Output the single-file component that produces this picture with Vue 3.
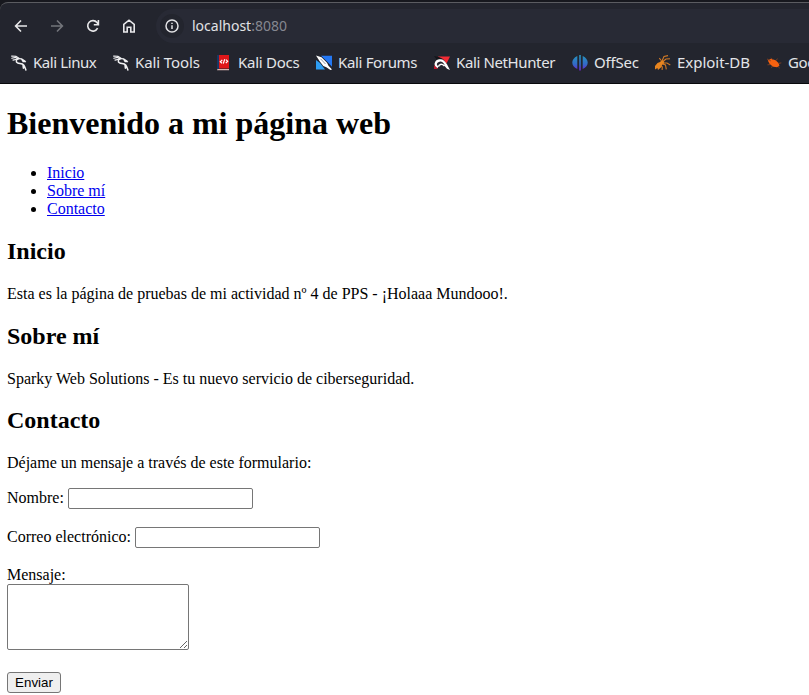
<script setup>
const bookmarks = [
  { label: 'Kali Linux', icon: 'dragon', width: 102, spacing: -0.42 },
  { label: 'Kali Tools', icon: 'dragon', width: 103, spacing: -0.1 },
  { label: 'Kali Docs', icon: 'docs', width: 100, spacing: -0.27 },
  { label: 'Kali Forums', icon: 'forums', width: 118, spacing: -0.34 },
  { label: 'Kali NetHunter', icon: 'hunter', width: 138, spacing: -0.38 },
  { label: 'OffSec', icon: 'offsec', width: 83, spacing: -0.2 },
  { label: 'Exploit-DB', icon: 'exploit', width: 111, spacing: -0.03 },
  { label: 'Google Hacking DB', icon: 'bug', width: 160, spacing: -0.35 }
]
const links = [
  { label: 'Inicio', id: 'inicio' },
  { label: 'Sobre mí', id: 'sobre-mi' },
  { label: 'Contacto', id: 'contacto' }
]
</script>

<template>
  <div class="window">
    <header class="chrome">
      <div class="panel">
        <div class="toolbar">
          <div class="tools">
            <svg class="tool" viewBox="0 0 16 16"><path d="M14 8H3M8 2.500 2.600 8 8 13.500" /></svg>
            <svg class="tool dim" viewBox="0 0 16 16"><path d="M2 8h11M8 2.500 13.400 8 8 13.500" /></svg>
            <svg class="tool" viewBox="0 0 16 16"><path d="M12.600 10.200A5.200 5.200 0 1 1 12 4.600l1.200 1.700M13.400 2v4.800H8.800" /></svg>
            <svg class="tool" viewBox="0 0 16 16"><path d="M2.800 14V6.300L8 2.200l5.200 4.100V14h-3.400V9.200H6.200V14Z" /></svg>
          </div>
          <div class="address">
            <span class="info">
              <svg viewBox="0 0 16 16"><circle cx="8" cy="8" r="6" /><path d="M8 7.300v3.800M8 4.700v1.400" /></svg>
            </span>
            <span class="url">localhost<span class="port">:8080</span></span>
          </div>
        </div>
        <nav class="bookmarks">
          <div v-for="b in bookmarks" :key="b.label" class="bookmark" :style="{ width: b.width + 'px', letterSpacing: b.spacing + 'px' }">
            <svg v-if="b.icon === 'dragon'" viewBox="0 0 16 16" fill="none" stroke="#f1f1f3" stroke-linecap="round">
              <path d="M.6 1.100 5 1.200 8 3.200M.8 3.300 4.400 2.400 7 4.300M2 5.100l3.800-.9" stroke-width="1.100" />
              <path d="M7 3.700c-2 .7-2.300 3.300-.5 4.200C8.200 9 11 8 12.700 10c1.100 1.400 1.500 3 2.200 5M12 10l.4 3.200" stroke-width="1.500" />
              <path d="m7.500 3.600 3.100.2 3.300 2.300M10.500 4l1.600 2.500 2.400.1" stroke-width="1.300" />
            </svg>
            <svg v-else-if="b.icon === 'docs'" viewBox="0 0 16 16">
              <path fill="#173765" d="M1 0h2v14H1z" /><path fill="#df1719" d="M3 0h10v13.500H3z" /><path fill="#d9b5af" d="M1.500 14H13v1.300H1z" />
              <path d="m6.300 4.800-2 2 1.700 1.500M9.900 4.600l1.800 1.600-1.900 2M8.700 4.300 7.300 8.600" fill="none" stroke="#fff" stroke-width="1.200" />
            </svg>
            <svg v-else-if="b.icon === 'forums'" viewBox="0 0 16 16">
              <path fill="#2d9df2" d="M0 5l4 3 5 6.500H0z" /><path fill="#2478f4" d="M5 .8h11v11L11.500 7z" />
              <path fill="#fff" d="M0 .5 5.500 2.200 11 7.700l1.500 3L16 14.500l-1.500.500-4.200-2.700-3-1.300L3.500 6z" />
              <path d="M4.500 3.800 9.500 9" fill="none" stroke="#6f7785" stroke-width=".8" />
            </svg>
            <svg v-else-if="b.icon === 'hunter'" viewBox="0 0 16 16">
              <path fill="#f32b34" d="M4 1.500h12l-3.500 7L9.500 4.500 5 3z" /><path fill="#c4192d" d="m0 10 4 4H0z" /><path fill="#14151a" d="m0 1 5 1 4 2-6 1z" />
              <path d="M4 12.300C.2 10.200 1.500 6.300 5.300 5.500 9 4.700 10.700 7.400 12.300 10.500" fill="none" stroke="#fff" stroke-width="2.300" />
              <path d="M4.500 11.600C5 9.200 7.500 8.300 10.500 11" fill="none" stroke="#fff" stroke-width="1.500" />
              <path fill="#fff" d="m9.500 9.800 3.500 4L16 15l-2.800-5.300z" />
            </svg>
            <svg v-else-if="b.icon === 'offsec'" viewBox="0 0 16 16">
              <defs><linearGradient id="offsec" x2="0" y2="1"><stop stop-color="#2596bd" /><stop offset=".6" stop-color="#336ac7" /><stop offset="1" stop-color="#7020ce" /></linearGradient></defs>
              <path fill="url(#offsec)" d="M5.300.9v13.200C-1.400 11-1.400 4 5.300.9ZM7.200 0h1.600v15.500H7.200zM10.700.9v13.200c6.700-3.100 6.700-10.100 0-13.200Z" />
            </svg>
            <svg v-else-if="b.icon === 'exploit'" viewBox="0 0 16 16">
              <path fill="#e8851f" d="m0 11 2.500-3L5 7l2-2 2 1 .2 2.500-2 1.200-.7 2.300L3 15l-.6-2L0 14.500z" />
              <path d="M7 6 9 1.500 13 .6M8 6.500 11 4l4-.2M8 8h4l3.300 2M7.500 9l3 1 .8 4.300M6.200 5.500 4.300 3.200M5.500 10l1.800 2-.2 3" fill="none" stroke="#d37a25" stroke-width="1.100" />
            </svg>
            <svg v-else viewBox="0 0 16 16">
              <path fill="#f66210" d="m1.800 5.600 3-1.800 4.800 1.500 3.200 2.900.6 2.600-2.300 1.500-3.700-.5-3.600-2.500z" />
              <path d="M1 4 5 6M7 5 5 2.800M10 5.600l1.500-2M12 8.500l3.300-.6M5 9.500l-3.500.3M7 11.300l-2 1.200M12 11.500l1.600 1.500" fill="none" stroke="#92451f" stroke-width=".8" />
            </svg>
            <span class="name">{{ b.label }}</span>
          </div>
        </nav>
      </div>
    </header>
    <main class="page">
      <h1>Bienvenido a mi página web</h1>
      <ul><li v-for="l in links" :key="l.id"><a :href="'#' + l.id">{{ l.label }}</a></li></ul>
      <section id="inicio">
        <h2>Inicio</h2>
        <p>Esta es la página de pruebas de mi actividad nº 4 de PPS - ¡Holaaa Mundooo!.</p>
      </section>
      <section id="sobre-mi">
        <h2>Sobre mí</h2>
        <p>Sparky Web Solutions - Es tu nuevo servicio de ciberseguridad.</p>
      </section>
      <section id="contacto">
        <h2>Contacto</h2>
        <p>Déjame un mensaje a través de este formulario:</p>
        <form @submit.prevent>
          <label for="nombre">Nombre:</label>&#32;<input id="nombre" type="text"><br><br>
          <label for="correo">Correo electrónico:</label>&#32;<input id="correo" type="email"><br><br>
          <label for="mensaje">Mensaje:</label><br>
          <textarea id="mensaje" rows="4"></textarea><br><br>
          <button type="submit">Enviar</button>
        </form>
      </section>
    </main>
  </div>
</template>

<style>
body { margin: 0; background: #fff; overflow: hidden; }
</style>
<style scoped>
.window { height: 695px; overflow: hidden; background: #fff; }
.chrome { height: 84px; box-sizing: border-box; padding-top: 2px; background: #17181e; border-bottom: 1px solid #08090c; overflow: hidden; font-family: "Noto Sans", sans-serif; }
.panel { height: 81px; box-sizing: border-box; background: #23252e; border-top: 1px solid #5b5c61; border-top-left-radius: 8px; }
.toolbar { display: flex; height: 46px; padding-top: 6px; box-sizing: border-box; }
.tools { display: flex; gap: 20px; width: 156px; box-sizing: border-box; padding: 9px 0 0 13px; }
.tool { width: 16px; height: 16px; flex: none; fill: none; stroke: #e8e8ea; stroke-width: 1.6; }
.dim { stroke: #73757b; }
.address { flex: 1; display: flex; align-items: center; height: 34px; background: #282a35; border-radius: 17px 0 0 17px; }
.info { display: flex; align-items: center; justify-content: center; width: 24px; height: 24px; margin-left: 4px; border-radius: 50%; background: #23252e; }
.info svg { width: 16px; height: 16px; fill: none; stroke: #e3e3e6; stroke-width: 1.5; }
.url { margin-left: 8px; font-size: 14px; line-height: 20px; color: #e1e2e6; }
.port { color: #858790; }
.bookmarks { display: flex; padding: 3px 0 0 11px; overflow: hidden; }
.bookmark { display: flex; align-items: center; flex: none; gap: 6px; height: 22px; color: #e4e5e9; font-size: 15px; white-space: nowrap; }
.bookmark svg { width: 16px; height: 16px; flex: none; }
.name { padding-bottom: 2px; line-height: 20px; }
.page { display: flow-root; padding: 0 7px; color: #000; font-family: "Liberation Serif", serif; font-size: 16px; line-height: normal; }
h1 { margin: 21.44px 0; font-size: 32px; }
h2 { margin: 19.92px 0; font-size: 24px; }
ul { margin: 16px 0; padding-left: 40px; }
a { color: #0000ee; text-decoration: underline; }
p { margin: 16px 0; }
input, textarea { box-sizing: border-box; border: 1px solid #767676; border-radius: 2px; background: #fff; }
input { width: 185px; height: 21px; padding: 1px 2px; font: 13.333px "Liberation Sans", sans-serif; }
textarea { width: 182px; height: 66px; padding: 2px; resize: both; font: 13.333px "Liberation Mono", monospace; }
button { box-sizing: border-box; width: 54px; height: 21px; padding: 1px 6px; border: 1px solid #767676; border-radius: 3px; background: #efefef; color: #000; font: 13.333px "Liberation Sans", sans-serif; }
</style>
